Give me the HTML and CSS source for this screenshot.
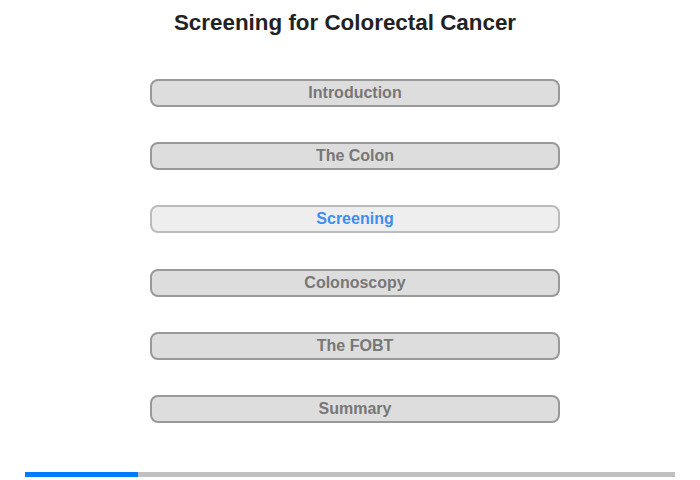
FILE: index.html
```html
<!DOCTYPE html>
<html>
<head>
<meta charset="utf-8">
<link rel="stylesheet" href="styles.css">
</head>
<body>
<div class="page">
  <h1 class="title">Screening for Colorectal Cancer</h1>
  <div class="menu">
    <div class="item">Introduction</div>
    <div class="item">The Colon</div>
    <div class="item active">Screening</div>
    <div class="item">Colonoscopy</div>
    <div class="item">The FOBT</div>
    <div class="item">Summary</div>
  </div>
  <div class="progress"><div class="fill" style="width:113px"></div></div>
</div>
</body>
</html>
```
FILE: styles.css
```css
html, body { margin: 0; padding: 0; background: #fff; }
body { font-family: "Liberation Sans", Arial, sans-serif; width: 700px; height: 480px; overflow: hidden; }
.page { display: flex; flex-direction: column; align-items: center; }
.title { margin: 10px 0 0 -10px; font-size: 22.4px; font-weight: bold; color: #222; line-height: 26px; }
.menu { display: flex; flex-direction: column; gap: 35.2px; margin: 43px 0 0 9px; }
.item { box-sizing: border-box; width: 410px; height: 28px; border: 2px solid #999; border-radius: 8px; background: #ddd; color: #777; font-size: 16px; font-weight: bold; line-height: 24px; text-align: center; padding-left: 1px; }
.item.active { background: #eee; border-color: #bbb; color: #3c8ef0; }
.progress { margin-top: 49px; width: 650px; height: 5px; background: #c0c0c0; }
.fill { height: 100%; background: #007bff; }
```
